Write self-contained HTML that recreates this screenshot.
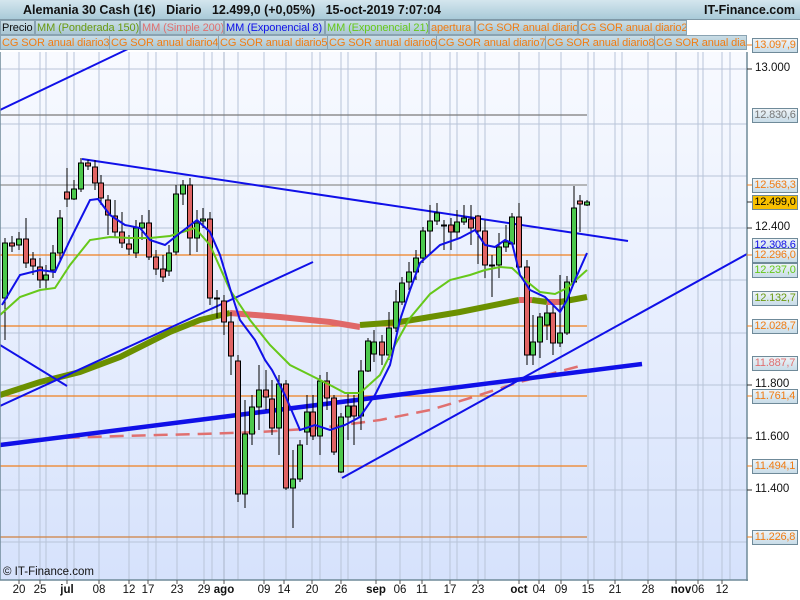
<!DOCTYPE html>
<html><head><meta charset="utf-8"><style>
*{margin:0;padding:0;box-sizing:border-box}
body{width:800px;height:600px;overflow:hidden;background:#fff;font-family:"Liberation Sans",Arial,sans-serif;position:relative}
.hdr{position:absolute;left:0;top:0;width:800px;height:20px;background:linear-gradient(#d4e6ee,#a9cad8);border-bottom:1px solid #7f98a6}
.hdr .t{position:absolute;left:23px;top:3px;font-size:12.5px;font-weight:bold;color:#111;white-space:pre}
.hdr .r{position:absolute;right:5px;top:3px;font-size:12.5px;font-weight:bold;color:#111}
.lg{position:absolute;height:15px;font-size:11px;line-height:14px;padding:0 1px;background:linear-gradient(#c9dde6,#a9c6d3);border:1px solid #8aa3b2;white-space:nowrap;overflow:hidden;letter-spacing:-0.1px}
.o{color:#f07c14}
.pl{position:absolute;left:752px;width:46px;height:15px;font-size:11px;line-height:13px;text-align:center;background:linear-gradient(#eef4f8,#c8dce8);border:1px solid #6f8a99;letter-spacing:-0.2px;white-space:nowrap;overflow:hidden}
.ax{position:absolute;left:755px;font-size:11.5px;color:#111}
.dl{position:absolute;top:584px;font-size:11.5px;color:#111;transform:translateX(-50%)}
.b{font-weight:bold}
</style></head><body>
<div style="position:absolute;left:0;top:52px;width:747px;height:528px;background:linear-gradient(#f8faff,#d6e2fc)"></div>
<svg style="position:absolute;left:0;top:0" width="800" height="600">
<g stroke="#b8c4d8" stroke-width="1">
<line x1="19" y1="52" x2="19" y2="580"/><line x1="40" y1="52" x2="40" y2="580"/><line x1="46" y1="52" x2="46" y2="580"/><line x1="67" y1="52" x2="67" y2="580" stroke="#a8b4c8"/><line x1="74" y1="52" x2="74" y2="580"/><line x1="99" y1="52" x2="99" y2="580"/><line x1="129" y1="52" x2="129" y2="580"/><line x1="148" y1="52" x2="148" y2="580"/><line x1="156" y1="52" x2="156" y2="580"/><line x1="177" y1="52" x2="177" y2="580"/><line x1="204" y1="52" x2="204" y2="580"/><line x1="212" y1="52" x2="212" y2="580"/><line x1="224" y1="52" x2="224" y2="580" stroke="#a8b4c8"/><line x1="238" y1="52" x2="238" y2="580"/><line x1="264" y1="52" x2="264" y2="580"/><line x1="286" y1="52" x2="286" y2="580"/><line x1="312" y1="52" x2="312" y2="580"/><line x1="320" y1="52" x2="320" y2="580"/><line x1="341" y1="52" x2="341" y2="580"/><line x1="348" y1="52" x2="348" y2="580"/><line x1="376" y1="52" x2="376" y2="580" stroke="#a8b4c8"/><line x1="400" y1="52" x2="400" y2="580"/><line x1="422" y1="52" x2="422" y2="580"/><line x1="430" y1="52" x2="430" y2="580"/><line x1="450" y1="52" x2="450" y2="580"/><line x1="457" y1="52" x2="457" y2="580"/><line x1="478" y1="52" x2="478" y2="580"/><line x1="485" y1="52" x2="485" y2="580"/><line x1="519" y1="52" x2="519" y2="580" stroke="#a8b4c8"/><line x1="539" y1="52" x2="539" y2="580"/><line x1="561" y1="52" x2="561" y2="580"/><line x1="588" y1="52" x2="588" y2="580"/><line x1="594" y1="52" x2="594" y2="580"/><line x1="615" y1="52" x2="615" y2="580"/><line x1="622" y1="52" x2="622" y2="580"/><line x1="648" y1="52" x2="648" y2="580"/><line x1="676" y1="52" x2="676" y2="580" stroke="#a8b4c8"/><line x1="698" y1="52" x2="698" y2="580"/><line x1="703" y1="52" x2="703" y2="580"/><line x1="722" y1="52" x2="722" y2="580"/><line x1="730" y1="52" x2="730" y2="580"/>
<line x1="0" y1="69" x2="747" y2="69"/><line x1="0" y1="124" x2="747" y2="124"/><line x1="0" y1="176" x2="747" y2="176"/><line x1="0" y1="228" x2="747" y2="228"/><line x1="0" y1="280" x2="747" y2="280"/><line x1="0" y1="333" x2="747" y2="333"/><line x1="0" y1="385" x2="747" y2="385"/><line x1="0" y1="438" x2="747" y2="438"/><line x1="0" y1="490" x2="747" y2="490"/><line x1="0" y1="542" x2="747" y2="542"/>
</g>
<g stroke-width="1.3">
<line x1="0" y1="115" x2="587" y2="115" stroke="#7a7a7a"/>
<line x1="0" y1="185" x2="587" y2="185" stroke="#909090"/>
<line x1="0" y1="255" x2="587" y2="255" stroke="#f08020"/>
<line x1="0" y1="326" x2="587" y2="326" stroke="#f08020"/>
<line x1="0" y1="396" x2="587" y2="396" stroke="#f08020"/>
<line x1="0" y1="466" x2="587" y2="466" stroke="#f08020"/>
<line x1="0" y1="537" x2="587" y2="537" stroke="#d08040"/>
</g>
<polyline fill="none" stroke="#e07070" stroke-width="2.5" stroke-dasharray="14,8" points="0,444 60,438 120,436 200,434 260,432 320,428 380,420 430,410 470,398 520,382 580,366"/>
<polyline fill="none" stroke="#6b9000" stroke-width="6" points="0,395 40,382 80,372 120,357 170,332 200,320 230,313"/>
<polyline fill="none" stroke="#e06868" stroke-width="6" points="230,313 280,317 330,322 360,327"/>
<polyline fill="none" stroke="#6b9000" stroke-width="6" points="360,325 400,322 460,312 519,300"/>
<line x1="519" y1="300" x2="532" y2="300" stroke="#e06868" stroke-width="6"/>
<line x1="532" y1="300" x2="547" y2="302" stroke="#6b9000" stroke-width="6"/>
<line x1="547" y1="302" x2="560" y2="302" stroke="#e06868" stroke-width="6"/>
<line x1="560" y1="302" x2="587" y2="297" stroke="#6b9000" stroke-width="6"/>
<g stroke="#1010e8" stroke-width="2">
<line x1="0" y1="110" x2="130" y2="48"/>
<line x1="82" y1="159" x2="628" y2="241"/>
<line x1="0" y1="406" x2="313" y2="262"/>
<line x1="0" y1="345" x2="67" y2="386"/>
<line x1="342" y1="478" x2="747" y2="254"/>
<line x1="0" y1="445" x2="642" y2="364" stroke-width="4.5"/>
</g>
<g stroke="#000" stroke-width="1">
<path d="M5 238V340M12 236V252M19 232V250M26 218V268M33 252V275M40 258V288M46 265V290M53 245V278M60 210V260M67 168V207M74 180V200M81 158V192M88 160V170M95 160V190M101 175V205M108 195V235M115 200V238M122 212V248M129 235V255M136 220V258M142 215V240M149 210V260M156 250V275M163 255V282M169 245V276M176 185V255M183 180V205M190 178V255M197 210V252M203 208V228M210 212V305M217 290V318M224 295V335M231 312V375M238 355V502M245 400V508M252 395V445M259 365V430M266 370V410M272 380V435M279 375V455M286 380V490M293 450V528M300 440V482M307 395V445M313 395V440M320 375V455M327 372V410M334 395V455M341 413V473M348 393V440M354 395V445M361 360V430M368 338V372M374 330V362M382 335V365M389 312V360M396 290V332M402 277V305M409 262V290M416 250V280M423 227V263M430 205V253M437 203V225M444 220V250M451 218V250M457 210V240M464 205V225M471 205V245M478 215V264M485 220V278M492 255V297M499 233V278M506 225V252M512 213V245M519 203V275M527 260V365M533 315V365M540 313V358M547 305V340M553 305V355M560 275V347M567 276V335M574 186V283M580 195V232M587 200V206"/>
</g>
<g stroke="#000" stroke-width="1" fill="#4cc84c">
<rect x="2.5" y="243" width="5" height="55"/><rect x="16.5" y="239" width="5" height="6"/><rect x="43.5" y="275" width="5" height="5"/><rect x="50.5" y="253" width="5" height="17"/><rect x="57.5" y="218" width="5" height="35"/><rect x="71.5" y="189" width="5" height="10"/><rect x="78.5" y="163" width="5" height="26"/><rect x="133.5" y="228" width="5" height="25"/><rect x="139.5" y="223" width="5" height="5"/><rect x="166.5" y="253" width="5" height="18"/><rect x="173.5" y="194" width="5" height="58"/><rect x="180.5" y="185" width="5" height="9"/><rect x="194.5" y="223" width="5" height="15"/><rect x="200.5" y="219" width="5" height="2"/><rect x="242.5" y="434" width="5" height="60"/><rect x="249.5" y="407" width="5" height="27"/><rect x="256.5" y="390" width="5" height="17"/><rect x="276.5" y="384" width="5" height="44"/><rect x="290.5" y="479" width="5" height="9"/><rect x="297.5" y="445" width="5" height="34"/><rect x="304.5" y="412" width="5" height="20"/><rect x="317.5" y="381" width="5" height="55"/><rect x="338.5" y="417" width="5" height="55"/><rect x="345.5" y="406" width="5" height="11"/><rect x="358.5" y="371" width="5" height="45"/><rect x="365.5" y="341" width="5" height="30"/><rect x="371.5" y="342" width="5" height="12"/><rect x="386.5" y="328" width="5" height="27"/><rect x="393.5" y="302" width="5" height="26"/><rect x="399.5" y="283" width="5" height="19"/><rect x="406.5" y="272" width="5" height="10"/><rect x="413.5" y="258" width="5" height="14"/><rect x="420.5" y="231" width="5" height="27"/><rect x="427.5" y="221" width="5" height="10"/><rect x="434.5" y="213" width="5" height="8"/><rect x="454.5" y="222" width="5" height="10"/><rect x="461.5" y="218" width="5" height="4"/><rect x="496.5" y="247" width="5" height="18"/><rect x="503.5" y="242" width="5" height="5"/><rect x="509.5" y="217" width="5" height="27"/><rect x="530.5" y="342" width="5" height="13"/><rect x="537.5" y="317" width="5" height="25"/><rect x="544.5" y="313" width="5" height="12"/><rect x="557.5" y="333" width="5" height="10"/><rect x="564.5" y="282" width="5" height="51"/><rect x="571.5" y="208" width="5" height="74"/><rect x="584.5" y="202" width="5" height="3"/>
</g>
<g stroke="#000" stroke-width="1" fill="#e06464">
<rect x="9.5" y="243" width="5" height="3"/><rect x="23.5" y="239" width="5" height="24"/><rect x="30.5" y="259" width="5" height="7"/><rect x="37.5" y="267" width="5" height="13"/><rect x="64.5" y="192" width="5" height="7"/><rect x="85.5" y="163" width="5" height="3"/><rect x="92.5" y="167" width="5" height="16"/><rect x="98.5" y="183" width="5" height="15"/><rect x="105.5" y="200" width="5" height="15"/><rect x="112.5" y="216" width="5" height="16"/><rect x="119.5" y="232" width="5" height="11"/><rect x="126.5" y="244" width="5" height="5"/><rect x="146.5" y="223" width="5" height="34"/><rect x="153.5" y="257" width="5" height="12"/><rect x="160.5" y="269" width="5" height="8"/><rect x="187.5" y="185" width="5" height="53"/><rect x="207.5" y="219" width="5" height="79"/><rect x="214.5" y="298" width="5" height="1"/><rect x="221.5" y="301" width="5" height="21"/><rect x="228.5" y="322" width="5" height="34"/><rect x="235.5" y="361" width="5" height="133"/><rect x="263.5" y="390" width="5" height="7"/><rect x="269.5" y="399" width="5" height="29"/><rect x="283.5" y="384" width="5" height="104"/><rect x="310.5" y="412" width="5" height="24"/><rect x="324.5" y="381" width="5" height="17"/><rect x="331.5" y="398" width="5" height="54"/><rect x="351.5" y="406" width="5" height="10"/><rect x="379.5" y="342" width="5" height="13"/><rect x="441.5" y="225" width="5" height="1"/><rect x="448.5" y="225" width="5" height="7"/><rect x="468.5" y="219" width="5" height="9"/><rect x="475.5" y="216" width="5" height="15"/><rect x="482.5" y="231" width="5" height="34"/><rect x="489.5" y="265" width="5" height="1"/><rect x="516.5" y="217" width="5" height="50"/><rect x="524.5" y="267" width="5" height="88"/><rect x="550.5" y="313" width="5" height="30"/><rect x="577.5" y="201" width="5" height="3"/>
</g>
<polyline fill="none" stroke="#66c81a" stroke-width="2" points="0,315 20,297 40,290 55,288 70,265 90,240 110,237 130,238 150,238 170,236 195,228 210,245 230,290 250,320 270,345 290,365 310,375 330,385 345,393 360,393 380,375 395,345 410,318 430,294 450,280 470,275 485,270 500,267 512,268 525,280 540,292 555,294 567,288 587,270"/>
<polyline fill="none" stroke="#1010e8" stroke-width="2" points="2,305 20,275 40,270 55,272 70,240 90,200 98,199 110,215 125,225 140,228 150,240 165,245 180,233 197,220 210,232 220,255 232,295 240,320 255,340 265,360 272,370 285,395 300,430 315,425 330,430 345,425 360,417 375,395 390,365 400,320 410,290 420,263 440,245 460,238 475,230 485,245 495,247 505,240 512,243 520,275 530,290 545,297 560,312 567,300 575,280 587,253"/>
<line x1="747" y1="52" x2="747" y2="581" stroke="#6f8a99" stroke-width="1.5"/>
<line x1="0" y1="580" x2="748" y2="580" stroke="#6f8a99" stroke-width="1.5"/>
<line x1="0" y1="52" x2="0" y2="580" stroke="#6f8a99" stroke-width="1.5"/>
<g stroke="#333"><line x1="747" y1="69" x2="752" y2="69"/><line x1="747" y1="228" x2="752" y2="228"/><line x1="747" y1="385" x2="752" y2="385"/><line x1="747" y1="438" x2="752" y2="438"/><line x1="747" y1="490" x2="752" y2="490"/><line x1="747" y1="202" x2="752" y2="202"/></g>
<g stroke="#f08020"><line x1="747" y1="45" x2="752" y2="45"/><line x1="747" y1="185" x2="752" y2="185"/><line x1="747" y1="255" x2="752" y2="255"/><line x1="747" y1="326" x2="752" y2="326"/><line x1="747" y1="396" x2="752" y2="396"/><line x1="747" y1="466" x2="752" y2="466"/><line x1="747" y1="537" x2="752" y2="537"/></g>
<g stroke="#555"><path d="M19 580v4M40 580v4M67 580v4M99 580v4M129 580v4M148 580v4M177 580v4M204 580v4M224 580v4M264 580v4M284 580v4M312 580v4M341 580v4M376 580v4M400 580v4M422 580v4M450 580v4M478 580v4M519 580v4M539 580v4M561 580v4M588 580v4M615 580v4M648 580v4M676 580v4M698 580v4M722 580v4"/></g>
<rect x="7" y="8" width="5" height="9" fill="#e06464" stroke="#000" stroke-width=".8"/>
<rect x="14" y="4" width="5" height="12" fill="#4cc84c" stroke="#000" stroke-width=".8"/>
</svg>
<div class="hdr"><div class="t">Alemania 30 Cash (1€)   Diario   12.499,0 (+0,05%)   15-oct-2019 7:07:04</div><div class="r">IT-Finance.com</div></div>
<div class="lg" style="left:0;top:20px;width:35px;color:#111">Precio</div>
<div class="lg" style="left:35px;top:20px;width:105px;color:#6a9a10">MM (Ponderada 150)</div>
<div class="lg" style="left:140px;top:20px;width:84px;color:#e07070">MM (Simple 200)</div>
<div class="lg" style="left:224px;top:20px;width:101px;color:#1010e8">MM (Exponencial 8)</div>
<div class="lg" style="left:325px;top:20px;width:104px;color:#66c81a">MM (Exponencial 21)</div>
<div class="lg o" style="left:429px;top:20px;width:46px">apertura</div>
<div class="lg o" style="left:475px;top:20px;width:103px">CG SOR anual diario</div>
<div class="lg o" style="left:578px;top:20px;width:109px">CG SOR anual diario2</div>
<div class="lg o" style="left:0;top:35px;width:110px">CG SOR anual diario3</div>
<div class="lg o" style="left:109px;top:35px;width:110px">CG SOR anual diario4</div>
<div class="lg o" style="left:218px;top:35px;width:110px">CG SOR anual diario5</div>
<div class="lg o" style="left:327px;top:35px;width:110px">CG SOR anual diario6</div>
<div class="lg o" style="left:436px;top:35px;width:110px">CG SOR anual diario7</div>
<div class="lg o" style="left:545px;top:35px;width:110px">CG SOR anual diario8</div>
<div class="lg o" style="left:654px;top:35px;width:93px">CG SOR anual diario9</div>
<div class="ax" style="top:62px">13.000</div>
<div class="ax" style="top:221px">12.400</div>
<div class="ax" style="top:378px">11.800</div>
<div class="ax" style="top:431px">11.600</div>
<div class="ax" style="top:483px">11.400</div>
<div class="pl o" style="top:38px">13.097,9</div>
<div class="pl" style="top:108px;color:#777">12.830,6</div>
<div class="pl o" style="top:178px">12.563,3</div>
<div class="pl" style="top:195px;background:#f8c000;color:#000">12.499,0</div>
<div class="pl" style="top:238px;color:#1010e8">12.308,6</div>
<div class="pl o" style="top:248px">12.296,0</div>
<div class="pl" style="top:263px;color:#66c81a">12.237,0</div>
<div class="pl" style="top:291px;color:#6a9a10">12.132,7</div>
<div class="pl o" style="top:319px">12.028,7</div>
<div class="pl" style="top:356px;color:#e07070">11.887,7</div>
<div class="pl o" style="top:389px">11.761,4</div>
<div class="pl o" style="top:459px">11.494,1</div>
<div class="pl o" style="top:530px">11.226,8</div>
<div style="position:absolute;left:3px;top:566px;font-size:11.5px;color:#111">© IT-Finance.com</div>
<div class="dl" style="left:19px">20</div><div class="dl" style="left:40px">25</div><div class="dl b" style="left:67px">jul</div><div class="dl" style="left:99px">08</div><div class="dl" style="left:129px">12</div><div class="dl" style="left:148px">17</div><div class="dl" style="left:177px">23</div><div class="dl" style="left:204px">29</div><div class="dl b" style="left:224px">ago</div><div class="dl" style="left:264px">09</div><div class="dl" style="left:284px">14</div><div class="dl" style="left:312px">20</div><div class="dl" style="left:341px">26</div><div class="dl b" style="left:376px">sep</div><div class="dl" style="left:400px">06</div><div class="dl" style="left:422px">11</div><div class="dl" style="left:450px">17</div><div class="dl" style="left:478px">23</div><div class="dl b" style="left:519px">oct</div><div class="dl" style="left:539px">04</div><div class="dl" style="left:561px">09</div><div class="dl" style="left:588px">15</div><div class="dl" style="left:615px">21</div><div class="dl" style="left:648px">28</div><div class="dl b" style="left:681px">nov</div><div class="dl" style="left:698px">06</div><div class="dl" style="left:722px">12</div>
</body></html>
